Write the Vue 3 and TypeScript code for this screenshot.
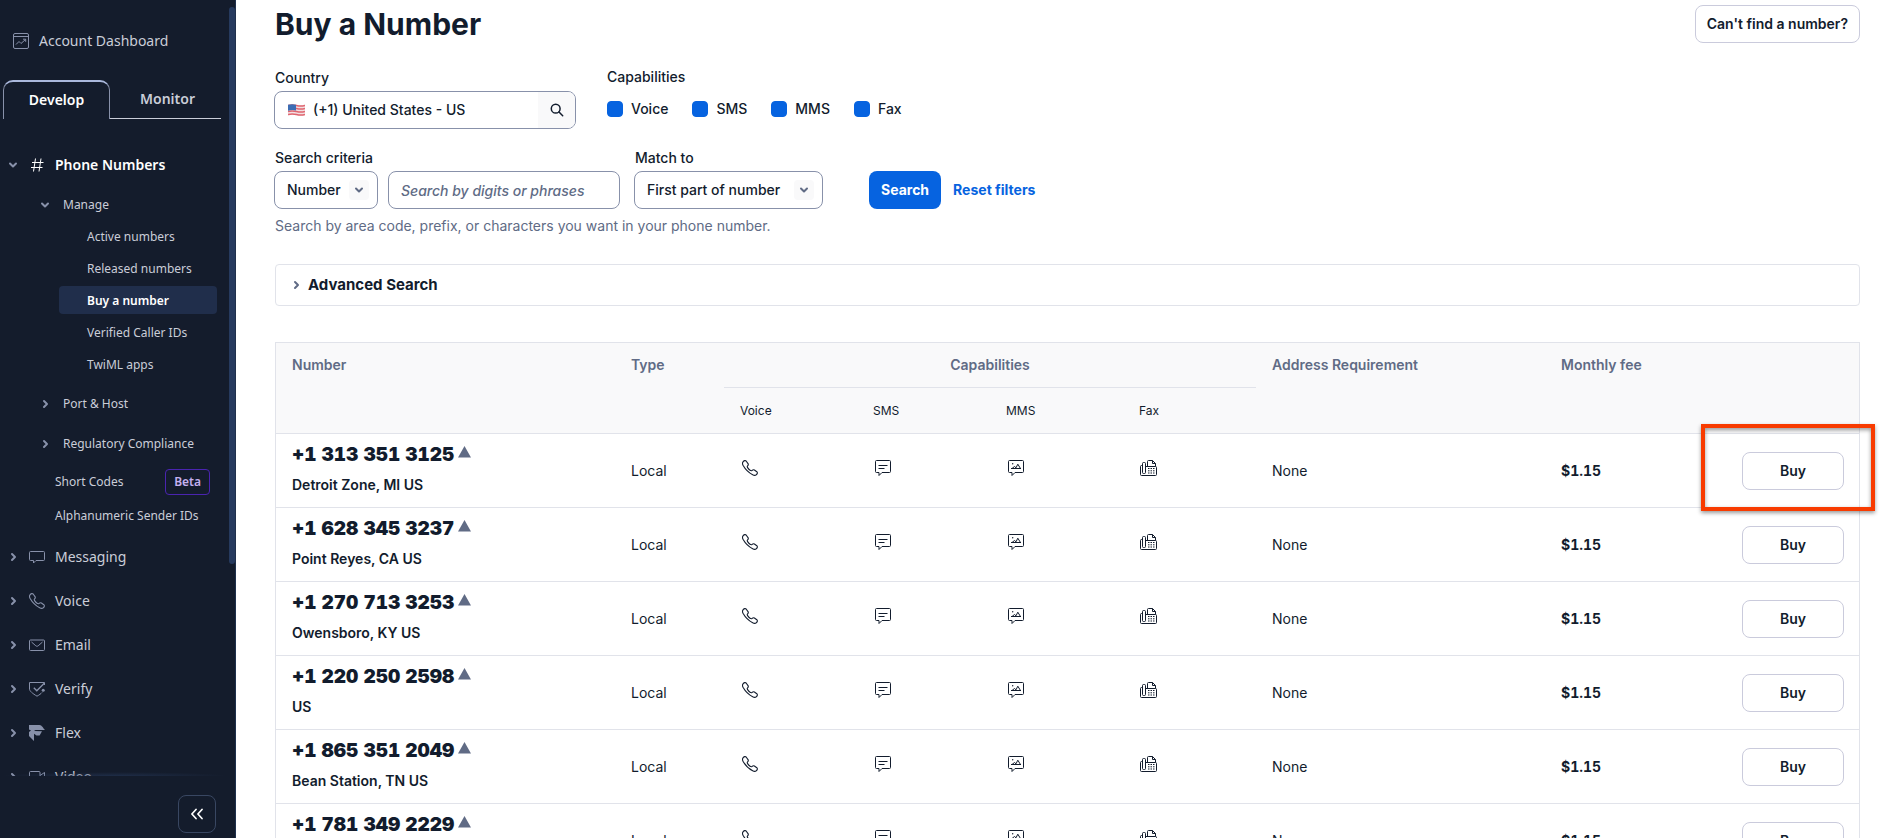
<script setup lang="ts">
import { ref } from 'vue'

interface PhoneNumberRow {
  number: string
  location: string
}

const rows: PhoneNumberRow[] = [
  { number: '+1 313 351 3125', location: 'Detroit Zone, MI US' },
  { number: '+1 628 345 3237', location: 'Point Reyes, CA US' },
  { number: '+1 270 713 3253', location: 'Owensboro, KY US' },
  { number: '+1 220 250 2598', location: 'US' },
  { number: '+1 865 351 2049', location: 'Bean Station, TN US' },
  { number: '+1 781 349 2229', location: 'US' },
]

const manageItems: string[] = ['Active numbers', 'Released numbers', 'Buy a number', 'Verified Caller IDs', 'TwiML apps']
const closedGroups: string[] = ['Port & Host', 'Regulatory Compliance']
const products: string[] = ['Messaging', 'Voice', 'Email', 'Verify', 'Flex', 'Video']
const capabilities: string[] = ['Voice', 'SMS', 'MMS', 'Fax']

const enabled = ref<string[]>([...capabilities])
const country = ref<string>('(+1) United States - US')
const query = ref<string>('')
const criteria = ref<string>('Number')
const match = ref<string>('First part of number')

function resetFilters(): void {
  enabled.value = [...capabilities]
  query.value = ''
}
</script>

<template>
  <div class="shell">
    <svg class="defs" aria-hidden="true">
      <symbol id="chev-down" viewBox="0 0 10 10"><path d="M2 3.5 5 6.5 8 3.5" fill="none" stroke="currentColor" stroke-width="2" stroke-linecap="round" stroke-linejoin="round" /></symbol>
      <symbol id="chev-right" viewBox="0 0 10 10"><path d="M4 2 7 5 4 8" fill="none" stroke="currentColor" stroke-width="2" stroke-linecap="round" stroke-linejoin="round" /></symbol>
      <symbol id="phone" viewBox="0 0 16 16"><path d="M1.2 1.6C2.2.5 3.5.3 4.3 1.2L6 3.6c.6.9.2 1.700-.4 2.300-.5.5-.4 1.100 0 1.700.8 1.300 1.600 2.100 2.800 2.800.6.4 1.200.5 1.700 0 .6-.6 1.400-1 2.300-.4l2.400 1.700c.9.8.7 2.100-.4 3-1 .9-2.500.8-3.700.1C7 12.900 3.200 9.200 1 5.300.4 4.100.3 2.600 1.200 1.600Z" fill="none" stroke="currentColor" stroke-width="1.100" stroke-linejoin="round" /></symbol>
    </svg>

    <aside class="sidebar">
      <a class="dashboard" href="#">
        <svg class="ico dim" viewBox="0 0 16 16" fill="none" stroke="currentColor"><rect x=".5" y=".5" width="15" height="15" rx="1.500" /><path d="M.5 3.500h15M3 11.500l3-3 2 2 4.500-4M10 6.200h2.700v2.600" /></svg>
        Account Dashboard
      </a>
      <div class="tabs" role="tablist">
        <button class="tab active" role="tab" aria-selected="true">Develop</button>
        <button class="tab" role="tab" aria-selected="false">Monitor</button>
      </div>

      <nav class="nav" aria-label="Products">
        <a class="product open" href="#">
          <svg class="chev"><use href="#chev-down" /></svg>
          <svg class="ico" viewBox="0 0 16 16" fill="none" stroke="currentColor"><path d="M6.500 1.500 4.500 14.500M12 1.500l-2 13M3 5.500h11.500M2 10.500h11.500" /></svg>
          Phone Numbers
        </a>
        <a class="group manage" href="#"><svg class="chev"><use href="#chev-down" /></svg>Manage</a>
        <a v-for="item in manageItems" :key="item" href="#" class="leaf">
          <span class="leaf-label" :class="{ current: item === 'Buy a number' }">{{ item }}</span>
        </a>
        <div class="closed">
          <a v-for="g in closedGroups" :key="g" class="group" href="#"><svg class="chev"><use href="#chev-right" /></svg>{{ g }}</a>
        </div>
        <a class="plain" href="#">Short Codes <span class="beta">Beta</span></a>
        <a class="plain" href="#">Alphanumeric Sender IDs</a>
        <div class="products">
          <a v-for="p in products" :key="p" class="product" href="#">
            <svg class="chev"><use href="#chev-right" /></svg>
            <svg v-if="p === 'Messaging'" class="ico dim" viewBox="0 0 16 16" fill="none" stroke="currentColor"><path d="M1.500 2.500h13a1 1 0 0 1 1 1v7a1 1 0 0 1-1 1H7L4.500 14v-2.500h-3a1 1 0 0 1-1-1v-7a1 1 0 0 1 1-1Z" /></svg>
            <svg v-else-if="p === 'Voice'" class="ico dim"><use href="#phone" /></svg>
            <svg v-else-if="p === 'Email'" class="ico dim" viewBox="0 0 16 16" fill="none" stroke="currentColor"><rect x=".5" y="3" width="15" height="10.500" rx="1" /><path d="m2.500 5 4.300 3.800c.7.6 1.700.6 2.400 0L13.500 5" /></svg>
            <svg v-else-if="p === 'Verify'" class="ico dim" viewBox="0 0 16 16" fill="none" stroke="currentColor"><path d="M15.500 4V1.500H.5V8c0 2 3 4.500 7.500 7.200 2.300-1.300 4-2.500 5-3.700" /><path d="m4.800 6.800 3 3L15.500 2" stroke-width="1.300" /><circle cx="14.200" cy="9.200" r="1.500" fill="currentColor" stroke="none" /></svg>
            <svg v-else-if="p === 'Flex'" class="ico dim" viewBox="0 0 16 16" fill="currentColor"><path d="M0 0h10.500C13 .2 14 3 16 5H6.500L5 6l8 .2-2.400 4.300H7.500L5 8.800v7.200L0 11V7l2-1.500L0 4.500Z" /></svg>
            <svg v-else class="ico dim" viewBox="0 0 16 16" fill="none" stroke="currentColor"><rect x=".5" y="2.500" width="10.500" height="11" rx="1" /><path d="m11 6.500 4.500-3v9l-4.500-3" /></svg>
            {{ p }}
          </a>
        </div>
      </nav>
      <div class="scrollbar"></div>
      <div class="sidebar-foot">
        <button class="collapse" aria-label="Collapse navigation">
          <svg width="12" height="12" viewBox="0 0 12 12" fill="none" stroke="currentColor" stroke-width="1.700" stroke-linecap="round" stroke-linejoin="round"><path d="M5 1.500.9 6 5 10.500M11 1.500 6.900 6 11 10.500" /></svg>
        </button>
      </div>
    </aside>

    <main class="main">
      <header class="head">
        <h1>Buy a Number</h1>
        <button class="btn">Can't find a number?</button>
      </header>

      <form class="filters" @submit.prevent>
        <div class="line first">
          <div class="field">
            <label for="country">Country</label>
            <div class="country">
              <svg class="flag" width="17" height="12" viewBox="0 0 17 12">
                <path d="M0 .8Q4-.4 8.500.8T17 .6v10.600q-4 1.200-8.500 0T0 11.400Z" fill="#f3dfe1" />
                <path d="M0 1.500q4-1.200 8.500 0t8.500 0M0 4.500q4-1.200 8.500 0t8.500 0M0 7.500q4-1.200 8.500 0t8.500 0M0 10.500q4-1.200 8.500 0t8.500 0" fill="none" stroke="#e0656f" stroke-width="1.500" />
                <path d="M0 .8Q4-.3 8 .7V6.500Q4 5.600 0 6.800Z" fill="#3c6db4" />
              </svg>
              <input id="country" v-model="country" type="text" />
              <button class="lookup" type="button" aria-label="Find country">
                <svg width="14" height="14" viewBox="0 0 14 14" fill="none" stroke="currentColor" stroke-width="1.500" stroke-linecap="round"><circle cx="5.700" cy="5.700" r="4.400" /><path d="m9 9 3.700 3.700" /></svg>
              </button>
            </div>
          </div>
          <fieldset class="caps">
            <legend>Capabilities</legend>
            <div class="checks">
              <label v-for="c in capabilities" :key="c" class="check">
                <input v-model="enabled" type="checkbox" :value="c" />{{ c }}
              </label>
            </div>
          </fieldset>
        </div>

        <div class="line second">
          <div class="field">
            <label for="criteria">Search criteria</label>
            <div class="select criteria">
              <select id="criteria" v-model="criteria"><option>Number</option><option>Location</option></select>
              <span class="caret"><svg class="chev"><use href="#chev-down" /></svg></span>
            </div>
          </div>
          <input v-model="query" class="query" type="text" placeholder="Search by digits or phrases" aria-label="Search by digits or phrases" />
          <div class="field">
            <label for="match">Match to</label>
            <div class="select match">
              <select id="match" v-model="match"><option>First part of number</option><option>Anywhere in number</option></select>
              <span class="caret"><svg class="chev"><use href="#chev-down" /></svg></span>
            </div>
          </div>
          <button class="search" type="submit">Search</button>
          <a class="reset" href="#" @click.prevent="resetFilters">Reset filters</a>
        </div>
        <p class="help">Search by area code, prefix, or characters you want in your phone number.</p>
      </form>

      <button class="advanced" aria-expanded="false"><svg class="chev"><use href="#chev-right" /></svg>Advanced Search</button>

      <table class="numbers">
        <colgroup>
          <col class="c-number" /><col class="c-type" /><col v-for="c in capabilities" :key="c" class="c-cap" /><col class="c-address" /><col class="c-fee" /><col class="c-buy" />
        </colgroup>
        <thead>
          <tr class="top">
            <th rowspan="2" scope="col">Number</th>
            <th rowspan="2" scope="col">Type</th>
            <th class="cap-head" colspan="4" scope="colgroup">Capabilities</th>
            <th rowspan="2" scope="col">Address Requirement</th>
            <th rowspan="2" scope="col">Monthly fee</th>
            <td rowspan="2"></td>
          </tr>
          <tr class="sub"><th v-for="c in capabilities" :key="c" scope="col">{{ c }}</th></tr>
        </thead>
        <tbody>
          <tr v-for="(row, i) in rows" :key="row.number">
            <td class="who">
              <div class="number">{{ row.number }}<svg class="tri" width="14" height="12" viewBox="0 0 14 12"><path d="M6.500 0 13 11.500H0Z" fill="#606b85" /></svg></div>
              <div class="place">{{ row.location }}</div>
            </td>
            <td>Local</td>
            <td><svg class="cap"><use href="#phone" /></svg></td>
            <td><svg class="cap" viewBox="0 0 16 16" fill="none" stroke="currentColor"><path d="M1.500.5h13a1 1 0 0 1 1 1v10a1 1 0 0 1-1 1H7L4 15.500v-3H1.500a1 1 0 0 1-1-1v-10a1 1 0 0 1 1-1ZM3.500 5.500h9M3.500 8.500h6" /></svg></td>
            <td><svg class="cap" viewBox="0 0 16 16" fill="none" stroke="currentColor"><path d="M1.500.5h13a1 1 0 0 1 1 1v10a1 1 0 0 1-1 1H7L4 15.500v-3H1.500a1 1 0 0 1-1-1v-10a1 1 0 0 1 1-1Z" /><path d="M3 8.500h10M4 8.500l2.500-2 1.500 1.300 1.800-3.600 2.700 4.300" /><circle cx="4.700" cy="3.700" r=".7" fill="currentColor" stroke="none" /></svg></td>
            <td><svg class="cap fax" viewBox="0 0 17 16" fill="none" stroke="currentColor"><path d="M2.500 5.500h-1a1 1 0 0 0-1 1v8a1 1 0 0 0 1 1h14a1 1 0 0 0 1-1v-7a1 1 0 0 0-1-1h-10" /><rect x="2.500" y="2.500" width="3" height="11" rx="1" /><path d="M7.500 6V1.500a1 1 0 0 1 1-1h4l3 3v3M12.500.5v3h3" /><path d="M8 8.500h1.500m1 0H12m1 0h1.500M8 10.800h1.500m1 0H12m1 0h1.500M8 13h1.500m1 0H12m1 0h1.500" /></svg></td>
            <td>None</td>
            <td class="fee">$1.15</td>
            <td class="action"><button class="btn buy">Buy</button><span v-if="i === 0" class="callout"></span></td>
          </tr>
        </tbody>
      </table>
    </main>
  </div>
</template>

<style>
body { margin: 0; background: #fff; }
</style>

<style scoped>
.shell { display: flex; height: 100vh; overflow: hidden; color: #121c2d; font-family: Inter, "Liberation Sans", sans-serif; font-size: 14px; line-height: 20px; }
.shell *, .shell *::before { box-sizing: border-box; }
.defs { position: absolute; width: 0; height: 0; }
a { color: inherit; text-decoration: none; }
button, input, select { font: inherit; color: inherit; margin: 0; }
button { cursor: pointer; }
svg { flex: none; }
.chev { width: 10px; height: 10px; display: block; color: #8891aa; }
.ico { width: 16px; height: 16px; }
.dim { color: #8891aa; }

.sidebar { position: relative; display: flex; flex-direction: column; flex: none; width: 236px; background: #141c2c; color: #cacdd8; font-family: "Noto Sans", "Open Sans", sans-serif; border-right: 1px solid #1f304c; }
.dashboard { display: flex; align-items: center; gap: 10px; height: 22px; margin: 30px 0 28px 13px; font-size: 14px; }
.tabs { display: flex; margin: 0 14px 0 3px; }
.tab { flex: 1; height: 39px; padding: 0 0 0 4px; border: 0; border-bottom: 1px solid #cacdd8; background: none; font-weight: 600; }
.tab.active { flex: none; width: 107px; padding: 0 0 2px; border: 1px solid #8891aa; border-top: 2px solid #aab8dc; border-bottom: 0; border-radius: 10px 10px 0 0; color: #fff; }
.nav { flex: 1; min-height: 0; overflow: hidden; padding-top: 24px; font-size: 12px; }
.product { display: flex; align-items: center; height: 44px; padding-left: 8px; font-size: 14px; }
.product .ico { margin: 0 10px 0 11px; }
.product.open { color: #fff; font-weight: 600; }
.group { display: flex; align-items: center; gap: 13px; height: 40px; padding-left: 40px; }
.manage { height: 30px; margin-top: 3px; }
.leaf { display: flex; align-items: center; height: 32px; padding: 0 18px 0 59px; }
.leaf-label { flex: 1; height: 28px; padding: 1px 0 0 28px; line-height: 27px; border-radius: 4px; }
.current { background: #202e4b; color: #fff; font-weight: 600; }
.closed { padding: 4px 0 1px; }
.plain { display: flex; align-items: center; justify-content: space-between; height: 34px; padding: 0 25px 0 55px; }
.beta { height: 26px; padding: 0 8px; line-height: 24px; border: 1px solid #4a24b0; border-radius: 4px; color: #c5b1f0; font-weight: 600; }
.products { padding-top: 2px; }
.scrollbar { position: absolute; top: 7px; right: 0; width: 6px; height: 557px; border-radius: 3px; background: #263a5e; }
.sidebar-foot { position: relative; display: flex; justify-content: flex-end; height: 62px; padding: 19px 19px 0 0; }
.sidebar-foot::before { content: ""; position: absolute; left: 0; right: 6px; top: -4px; height: 4px; background: radial-gradient(ellipse at bottom, #26385a99, transparent 70%); }
.collapse { display: flex; align-items: center; justify-content: center; width: 38px; height: 38px; padding: 0; border: 1px solid #394762; border-radius: 8px; background: none; color: #fff; }

.main { flex: 1; min-width: 0; padding: 4px 35px 0 39px; }
.head { display: flex; align-items: center; justify-content: space-between; height: 40px; }
h1 { margin: 0; font-size: 30px; line-height: 40px; font-weight: 700; }
.btn { height: 38px; padding: 0 11px; border: 1px solid #cacbdc; border-radius: 8px; background: #fff; font-weight: 600; }
.filters { margin-left: -1px; }
.line { display: flex; align-items: flex-end; font-weight: 500; }
.first { margin-top: 24px; gap: 31px; }
.second { margin-top: 19px; }
.field > label { display: block; padding-left: 1px; margin-bottom: 3px; }
.country { display: flex; align-items: center; width: 302px; height: 38px; padding-left: 13px; border: 1px solid #8891aa; border-radius: 8px; overflow: hidden; }
.country input { flex: 1; min-width: 0; padding: 0 0 0 8px; border: 0; outline: 0; background: none; }
.lookup { display: flex; align-items: center; justify-content: center; width: 37px; height: 36px; padding: 0; border: 0; background: #f9f9fa; }
.caps { margin: -1px 0 0; padding: 0; border: 0; min-width: 0; align-self: flex-start; }
legend { padding: 0; }
.checks { display: flex; gap: 24px; margin-top: 12px; }
.check { display: flex; align-items: center; gap: 8px; }
.check input { appearance: none; width: 16px; height: 16px; border: 1px solid #8891aa; border-radius: 4px; }
.check input:checked { border-color: #0663e0; background: #0663e0; }
.select { position: relative; }
.select select { appearance: none; width: 100%; height: 38px; padding: 0 12px; border: 1px solid #8891aa; border-radius: 8px; background: #fff; display: block; }
.criteria { width: 104px; }
.match { width: 189px; }
.caret { position: absolute; top: 9px; right: 9px; display: flex; align-items: center; justify-content: center; width: 20px; height: 20px; border-radius: 4px; background: #f9f9fa; pointer-events: none; }
.caret .chev, .advanced .chev { color: #606b85; }
.query { width: 232px; height: 38px; margin: 0 14px 0 10px; padding: 0 12px; border: 1px solid #8891aa; border-radius: 8px; }
.query::placeholder { color: #606b85; font-style: italic; opacity: 1; }
.search { height: 38px; margin-left: 46px; padding: 0 12px; border: 0; border-radius: 8px; background: #0663e0; color: #fff; font-weight: 700; }
.reset { margin-left: 12px; line-height: 38px; color: #0663e0; font-weight: 700; }
.help { margin: 7px 0 0 1px; color: #606b85; }
.advanced { display: flex; align-items: center; gap: 7px; width: 100%; height: 42px; margin: 28px 0 36px; padding: 0 15px; border: 1px solid #e1e3ea; border-radius: 4px; background: #fff; font-size: 15px; font-weight: 700; }

.numbers { width: 100%; table-layout: fixed; border-collapse: separate; border-spacing: 0; border: 1px solid #e1e3ea; }
.c-number { width: 339px; }
.c-type { width: 109px; }
.c-cap { width: 133px; }
.c-address { width: 289px; }
.c-fee { width: 181px; }
.c-buy { width: 133px; }
th, td { padding: 0 0 0 16px; text-align: left; }
thead th, thead td { background: #f9f9fa; border-bottom: 1px solid #e1e3ea; vertical-align: top; }
.top th { height: 45px; padding-top: 12px; color: #606b85; font-weight: 600; }
.top .cap-head { padding-left: 0; text-align: center; }
.sub th { height: 46px; vertical-align: middle; font-size: 12px; font-weight: 400; }
tbody td { height: 74px; border-bottom: 1px solid #e1e3ea; vertical-align: middle; }
tbody .who { padding-bottom: 3px; }
.number { display: flex; font-size: 19px; line-height: 24px; font-weight: 900; font-variant-numeric: tabular-nums; }
.tri { margin: 3px 0 0 4px; }
.place { margin-top: 8px; font-weight: 600; line-height: 20px; }
.cap { display: block; width: 16px; height: 16px; margin: 0 0 5px 2px; }
.fax { width: 17px; margin-left: 1px; }
.fee { font-weight: 700; font-variant-numeric: tabular-nums; }
.action { position: relative; padding-right: 15px; }
.buy { display: block; width: 100%; }
.callout { position: absolute; inset: -10px -16px -4px -25px; border: 4px solid #f83b00; box-shadow: 0 2px 4px #0006, inset 0 2px 4px #0006; pointer-events: none; }
</style>
